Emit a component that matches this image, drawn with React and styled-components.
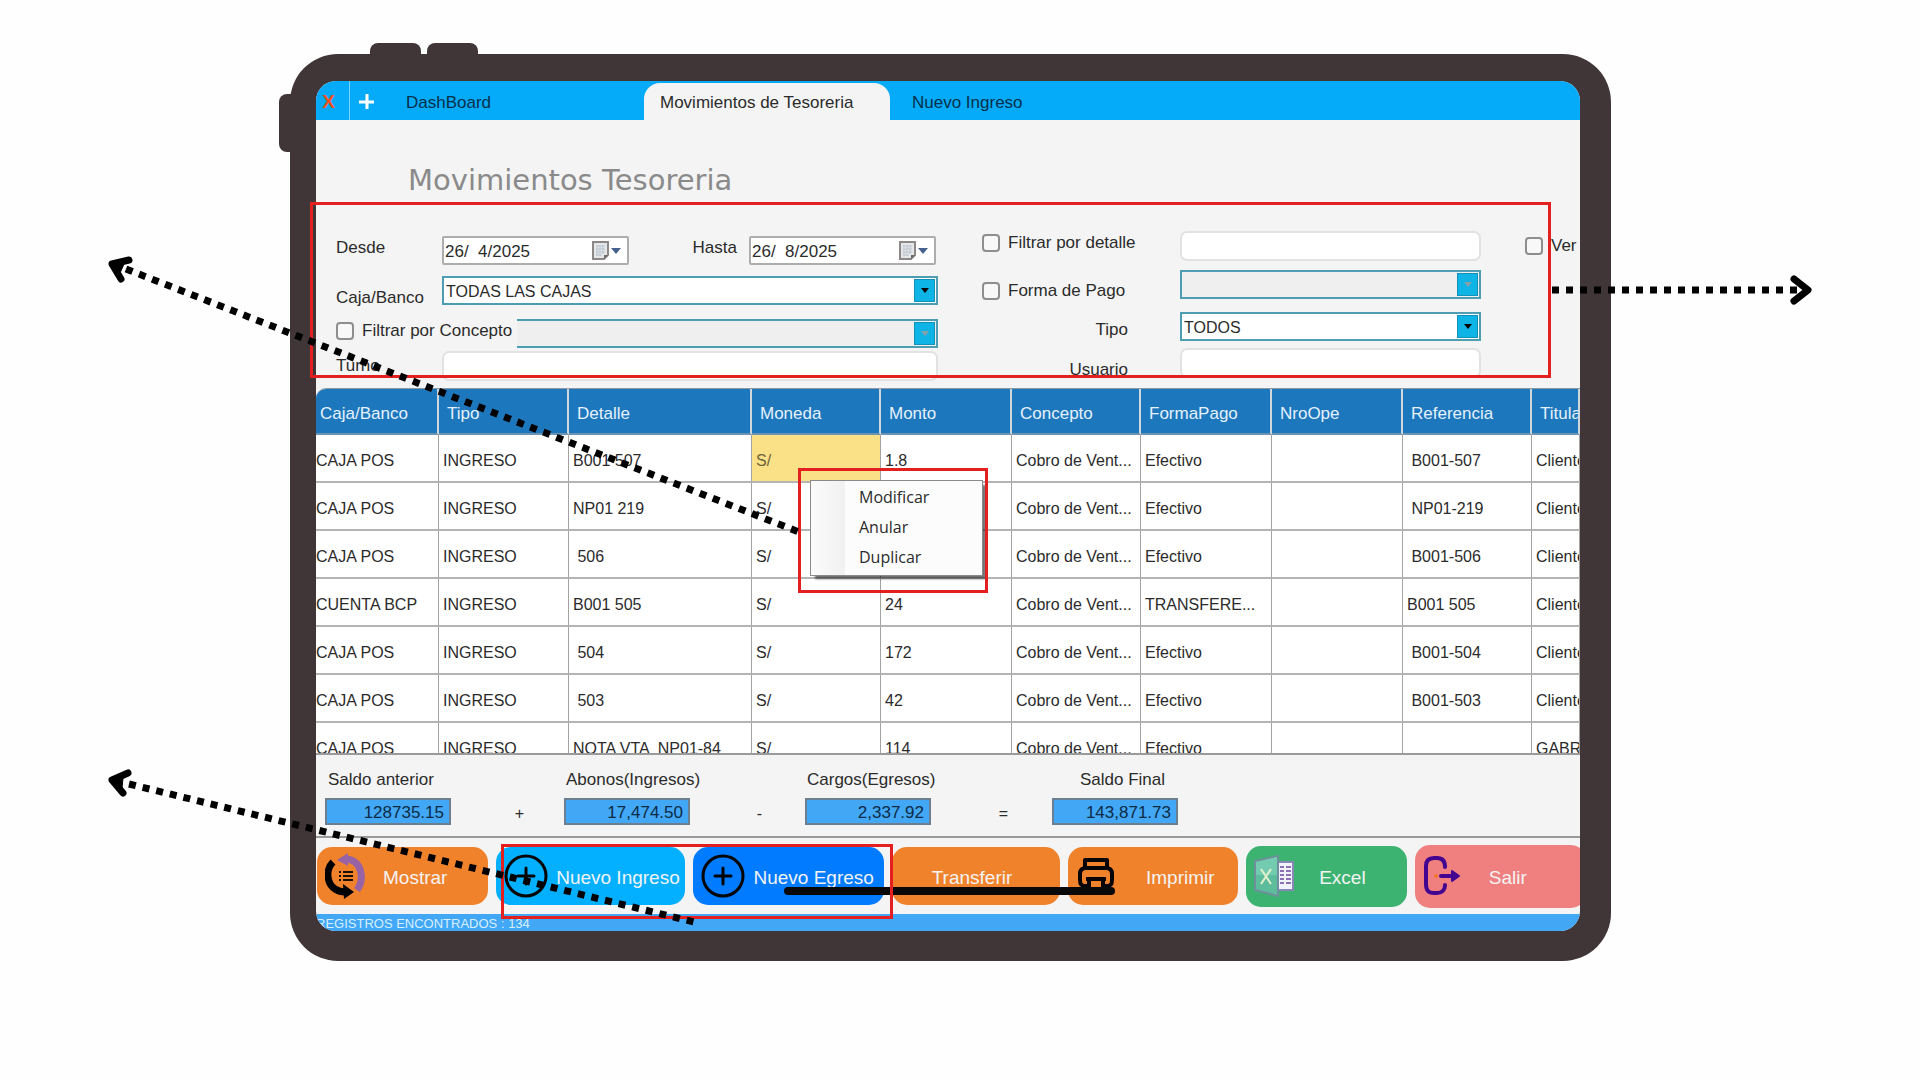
import React from 'react';
import styled, { createGlobalStyle } from 'styled-components';

const GlobalStyle = createGlobalStyle`
  * {
    box-sizing: border-box;
  }

  body {
    margin: 0;
    background-color: #fefefe;
    font-family: 'Liberation Sans', Arial, sans-serif;
    font-size: 17px;
    color: #2b2b2b;
  }

  button, input, select {
    font-family: inherit;
    font-size: inherit;
    color: inherit;
    margin: 0;
  }
`;

const Stage = styled.main`
  position: relative;
  min-height: 1080px;
  padding: 54px 309px 100px 290px;
  overflow: hidden;
`;

const Device = styled.div`
  position: relative;
  padding: 27px 31px 30px 26px;
  background-color: #403637;
  border-radius: 48px;
`;

const DeviceKey = styled.span`
  position: absolute;
  top: ${(props) => props.$top}px;
  left: ${(props) => props.$left}px;
  width: ${(props) => props.$width}px;
  height: ${(props) => props.$height}px;
  background-color: #403637;
  border-radius: 8px;
`;

const Screen = styled.div`
  background-color: #f4f4f4;
  border-radius: 20px;
  overflow: hidden;
`;

const TabBar = styled.nav`
  display: flex;
  height: 39px;
  background-color: #05aaf9;
`;

const TabAction = styled.button`
  display: flex;
  align-items: center;
  justify-content: center;
  width: 34px;
  padding: 2px ${(props) => (props.$divider ? 8 : 2)}px 0 0;
  border: 0;
  border-right: ${(props) => (props.$divider ? '1px solid #7fd0fa' : '0')};
  background: none;
  color: #f4511e;
  font-size: 19px;
  font-weight: bold;
`;

const Tab = styled.button`
  width: ${(props) => props.$width}px;
  margin-top: 2px;
  padding: 2px ${(props) => (props.$active ? 16 : 22)}px 0;
  border: 0;
  border-radius: 16px 16px 0 0;
  background-color: ${(props) => (props.$active ? '#f4f4f4' : 'transparent')};
  color: ${(props) => (props.$active ? '#2b2b2b' : '#06304a')};
  text-align: left;
  white-space: nowrap;
`;

const Title = styled.h1`
  margin: 0;
  padding: 40px 0 0 92px;
  font-family: 'DejaVu Sans', Verdana, sans-serif;
  font-size: 29px;
  font-weight: normal;
  line-height: 40px;
  color: #8a8a8a;
`;

const Filters = styled.form`
  display: grid;
  grid-template-columns: minmax(0, 602fr) minmax(0, 499fr) 55px;
  column-gap: 44px;
  padding: 31px 0 6px 20px;
`;

const MainFilters = styled.div`
  display: grid;
  grid-template-columns: 106px minmax(0, 187fr) 120px minmax(0, 189fr);
  grid-template-rows: 40px 43px 32px 30px;
  align-items: start;
  padding-top: 5px;
`;

const ExtraFilters = styled.div`
  display: grid;
  grid-template-columns: 198px minmax(0, 1fr);
  grid-template-rows: 39px 42px 36px 34px;
  align-items: start;
`;

const ViewFilters = styled.div`
  padding-top: 3px;
`;

const Label = styled.label`
  display: flex;
  align-items: center;
  gap: 8px;
  align-self: ${(props) => props.$align || 'start'};
  justify-self: ${(props) => props.$justify || 'start'};
  padding-right: ${(props) => props.$end || 0}px;
  line-height: 24px;
  white-space: nowrap;
`;

const Check = styled.input`
  appearance: none;
  flex: none;
  width: 18px;
  height: 18px;
  border: 2px solid #8e8e8e;
  border-radius: 4px;
  background-color: #f8f8f8;
`;

const ConceptRow = styled.div`
  grid-column: 1 / -1;
  display: flex;

  label {
    width: 181px;
  }
`;

const DateBox = styled.div`
  display: flex;
  align-items: center;
  width: 187px;
  height: 29px;
  padding-right: 6px;
  border: 2px solid #adadad;
  border-radius: 2px;
  background-color: #fff;

  input {
    flex: 1;
    min-width: 0;
    padding: 3px 0 0 1px;
    border: 0;
    background: none;
  }
`;

const TextBox = styled.input`
  width: 100%;
  height: 30px;
  border: 2px solid #e2e2e2;
  border-radius: 7px;
  background-color: #fff;
  grid-column: ${(props) => (props.$wide ? '2 / -1' : 'auto')};
`;

const SelectBox = styled.div`
  display: flex;
  flex: 1;
  height: 29px;
  padding: 1px;
  border: 2px solid #4d9db3;
  border-left-width: ${(props) => (props.$open ? 0 : 2)}px;
  background-color: ${(props) => (props.$disabled ? '#efefef' : '#fff')};
  grid-column: ${(props) => (props.$wide ? '2 / -1' : 'auto')};

  select {
    appearance: none;
    flex: 1;
    min-width: 0;
    padding: 2px 1px 0;
    border: 0;
    background: none;
    font-size: 16px;
    opacity: 1;
  }
`;

const SelectArrow = styled.span`
  display: flex;
  align-items: center;
  justify-content: center;
  width: 21px;
  border: 1px solid #1390b8;
  background-color: #0fb4e6;
  color: ${(props) => (props.$disabled ? '#86a0a8' : '#000')};
`;

const GridView = styled.div`
  height: 365px;
  overflow: hidden;
  border-top: 1px solid #8d99a3;
  border-radius: 10px 0 0 0;
  background-color: #fff;
`;

const Table = styled.table`
  width: 100%;
  table-layout: fixed;
  border-collapse: separate;
  border-spacing: 0;
`;

const HeadCell = styled.th`
  height: 46px;
  padding: 6px 0 0 8px;
  border-right: 2px solid #cfd6dc;
  border-bottom: 2px solid #6d93b3;
  background-color: #1c77bd;
  color: #e6f1fa;
  font-weight: normal;
  text-align: left;
  white-space: nowrap;
  overflow: hidden;

  &:first-child {
    padding-left: 4px;
  }
`;

const Cell = styled.td`
  height: 48px;
  padding: 6px 0 0 4px;
  border-right: 1px solid #a3a3a3;
  border-bottom: 2px solid #b5b5b5;
  background-color: ${(props) => (props.$selected ? '#fae188' : '#fff')};
  color: ${(props) => (props.$selected ? '#6d6238' : '#2b2b2b')};
  font-size: 16px;
  white-space: pre;
  overflow: hidden;

  &:first-child {
    padding-left: 0;
  }
`;

const Totals = styled.section`
  display: grid;
  grid-template-columns: 126px 113px 126px 115px 126px 121px 126px;
  grid-template-rows: 24px 27px;
  row-gap: 6px;
  padding: 13px 9px 11px;
  border-top: 2px solid #9a9a9a;
  border-bottom: 2px solid #9a9a9a;
`;

const TotalLabel = styled.label`
  grid-row: 1;
  grid-column: ${(props) => props.$col};
  padding-left: ${(props) => props.$indent}px;
  line-height: 24px;
  white-space: nowrap;
`;

const TotalBox = styled.output`
  grid-row: 2;
  grid-column: ${(props) => props.$col};
  padding-right: 5px;
  border: 2px solid #6b7f90;
  background-color: #42a7f5;
  color: #0d2b45;
  line-height: 25px;
  text-align: right;
`;

const Operator = styled.span`
  grid-row: 2;
  grid-column: ${(props) => props.$col};
  padding-left: 24px;
  font-size: 16px;
  line-height: 32px;
  text-align: center;
`;

const ActionBar = styled.div`
  display: flex;
  align-items: center;
  gap: 8px;
  height: 76px;
  margin-right: -6px;
  padding-left: 1px;
`;

const ActionButton = styled.button`
  display: flex;
  align-items: center;
  flex: ${(props) => props.$grow} 1 0;
  gap: ${(props) => props.$gap}px;
  min-width: 0;
  height: ${(props) => props.$height || 58}px;
  padding: 0 0 0 8px;
  border: 0;
  border-radius: 15px;
  background-color: ${(props) => props.$color};
  color: #f3f3f3;
  font-size: 19px;
  white-space: nowrap;

  svg {
    flex: none;
  }
`;

const ActionText = styled.span`
  padding-top: 4px;
`;

const StatusBar = styled.footer`
  height: 17px;
  background-color: #42a7f5;
  color: #d8efff;
  font-size: 13px;
  line-height: 19px;
  white-space: nowrap;
`;

const ContextMenu = styled.ul`
  position: absolute;
  top: 480px;
  left: 810px;
  width: 173px;
  margin: 0;
  padding: 1px 2px 3px;
  border: 1px solid #8a8a8a;
  background: linear-gradient(to right, #fbfbfb, #f1f1f1 34px, #fcfcfc 34px);
  box-shadow: 4px 4px 2px -1px rgba(0, 0, 0, 0.55);
  list-style: none;
`;

const MenuItem = styled.button`
  display: block;
  width: 100%;
  padding: 0 0 0 46px;
  border: 0;
  background: none;
  font-family: 'Open Sans', 'Noto Sans', sans-serif;
  font-size: 16px;
  line-height: 30px;
  text-align: left;
`;

const Highlight = styled.div`
  position: absolute;
  top: ${(props) => props.$top}px;
  left: ${(props) => props.$left}px;
  width: ${(props) => props.$width}px;
  height: ${(props) => props.$height}px;
  border: 3px solid #e41f1f;
  pointer-events: none;
`;

const HomeIndicator = styled.div`
  position: absolute;
  top: 887px;
  left: 784px;
  width: 331px;
  height: 8px;
  border-radius: 4px;
  background-color: #080808;
`;

const Arrows = styled.svg`
  position: absolute;
  top: 0;
  left: 0;
  pointer-events: none;
`;

const columns = [
  { name: 'Caja/Banco', width: 123 },
  { name: 'Tipo', width: 130 },
  { name: 'Detalle', width: 183 },
  { name: 'Moneda', width: 129 },
  { name: 'Monto', width: 131 },
  { name: 'Concepto', width: 129 },
  { name: 'FormaPago', width: 131 },
  { name: 'NroOpe', width: 131 },
  { name: 'Referencia', width: 129 },
  { name: 'Titular' },
];

const rows = [
  ['CAJA POS', 'INGRESO', 'B001 507', 'S/', '1.8', 'Cobro de Vent...', 'Efectivo', '', ' B001-507', 'Cliente'],
  ['CAJA POS', 'INGRESO', 'NP01 219', 'S/', '', 'Cobro de Vent...', 'Efectivo', '', ' NP01-219', 'Cliente'],
  ['CAJA POS', 'INGRESO', ' 506', 'S/', '', 'Cobro de Vent...', 'Efectivo', '', ' B001-506', 'Cliente'],
  ['CUENTA BCP', 'INGRESO', 'B001 505', 'S/', '24', 'Cobro de Vent...', 'TRANSFERE...', '', 'B001 505', 'Cliente'],
  ['CAJA POS', 'INGRESO', ' 504', 'S/', '172', 'Cobro de Vent...', 'Efectivo', '', ' B001-504', 'Cliente'],
  ['CAJA POS', 'INGRESO', ' 503', 'S/', '42', 'Cobro de Vent...', 'Efectivo', '', ' B001-503', 'Cliente'],
  ['CAJA POS', 'INGRESO', 'NOTA VTA  NP01-84', 'S/', '114', 'Cobro de Vent...', 'Efectivo', '', '', 'GABRIEL'],
];

const totals = [
  { id: 'anterior', label: 'Saldo anterior', value: '128735.15', indent: 3, operator: '+' },
  { id: 'abonos', label: 'Abonos(Ingresos)', value: '17,474.50', indent: 2, operator: '-' },
  { id: 'cargos', label: 'Cargos(Egresos)', value: '2,337.92', indent: 2, operator: '=' },
  { id: 'final', label: 'Saldo Final', value: '143,871.73', indent: 28 },
];

const CalendarIcon = () => (
  <svg width="29" height="20" viewBox="0 0 29 20">
    <path d="M1 1h15v13l-4 4H1z" fill="#e4e7ea" stroke="#8d8787" strokeWidth="2" />
    <path d="M4 5h9M4 8h9M4 11h9M4 14h6M5 4v11M8 4v11M11 4v9" stroke="#bcc5cf" strokeWidth="1" />
    <path d="M16 14h-4v4z" fill="#6f6a6a" />
    <path d="M19 7h10l-5 6z" fill="#47618f" />
  </svg>
);

const RefreshListIcon = () => (
  <svg width="41" height="46" viewBox="0 0 41 46">
    <path d="M8 9C0 17 2 31 10 36c3 2 6 3 10 3" fill="none" stroke="#000" strokeWidth="7" />
    <path d="M18 31l11 8-10 7z" fill="#000" />
    <path d="M20 6c17 0 20 20 12 31" fill="none" stroke="#9763a4" strokeWidth="7" />
    <path d="M12 7L23 0v13z" fill="#9763a4" />
    <path d="M18 19h10M18 23h10M18 27h10" stroke="#1a0f08" strokeWidth="2" />
    <path d="M14 19h2M14 23h2M14 27h2" stroke="#1a0f08" strokeWidth="2" />
  </svg>
);

const PlusCircleIcon = () => (
  <svg width="44" height="46" viewBox="0 0 44 46" fill="none" stroke="#050505">
    <circle cx="22" cy="23" r="20" strokeWidth="3" />
    <path d="M22 15v16M14 23h16" strokeWidth="3" strokeLinecap="round" />
  </svg>
);

const PrinterIcon = () => (
  <svg width="40" height="40" viewBox="0 0 40 40" fill="none" stroke="#050505" strokeWidth="4" strokeLinejoin="round">
    <path d="M9 11V4h22v7" />
    <path d="M12 30H9c-4 0-5-2-5-6v-6c0-4 2-6 6-6h20c4 0 6 2 6 6v6c0 4-1 6-5 6h-3" />
    <path d="M10 23h20M13 23v14h14V23" />
  </svg>
);

const ExcelIcon = () => (
  <svg width="41" height="42" viewBox="0 0 41 42">
    <rect x="24" y="7" width="15" height="28" fill="#f0f4ff" stroke="#8a86b8" strokeWidth="2" />
    <path d="M26 12h4M32 12h5M26 16h4M32 16h5M26 20h4M32 20h5M26 24h4M32 24h5M26 28h4M32 28h5" stroke="#8d70b5" strokeWidth="2" />
    <path d="M1 6l23-5v40L1 35z" fill="#5cbc9c" stroke="#6f8f9c" strokeWidth="2" />
    <path d="M2 7l21-5v18H2z" fill="#74ccb0" />
    <path d="M7 14l10 15M17 14L7 29" stroke="#e3f2cd" strokeWidth="2" />
  </svg>
);

const ExitIcon = () => (
  <svg width="38" height="40" viewBox="0 0 38 40" fill="none" stroke="#43058f" strokeWidth="4" strokeLinecap="round">
    <path d="M22 11c0-6-3-9-8-9h-3c-6 0-8 3-8 8v18c0 6 2 9 8 9h3c5 0 8-3 8-8" />
    <path d="M18 20h12" />
    <path d="M29 15l7 5-7 5z" fill="#43058f" strokeWidth="2" strokeLinejoin="round" />
    <circle cx="13" cy="20" r="1" stroke="#f4742a" strokeWidth="2" />
  </svg>
);

const DateField = ({ id, value }) => (
  <DateBox>
    <input id={id} type="text" defaultValue={value} />
    <CalendarIcon />
  </DateBox>
);

const SelectField = ({ id, value, disabled, wide, open, name }) => (
  <SelectBox $disabled={disabled} $wide={wide} $open={open}>
    <select id={id} disabled={disabled} aria-label={name}>
      <option>{value}</option>
    </select>
    <SelectArrow $disabled={disabled}>
      <svg width="8" height="5" viewBox="0 0 8 5">
        <path d="M0 0h8L4 5z" fill="currentColor" />
      </svg>
    </SelectArrow>
  </SelectBox>
);

const FilterForm = () => (
  <Filters>
    <MainFilters>
      <Label htmlFor="desde">Desde</Label>
      <DateField id="desde" value="26/  4/2025" />
      <Label htmlFor="hasta" $justify="end" $end={12}>Hasta</Label>
      <DateField id="hasta" value="26/  8/2025" />
      <Label htmlFor="caja" $align="center">Caja/Banco</Label>
      <SelectField id="caja" value="TODAS LAS CAJAS" wide />
      <ConceptRow>
        <Label>
          <Check type="checkbox" />
          Filtrar por Concepto
        </Label>
        <SelectField name="Concepto" value="" disabled open />
      </ConceptRow>
      <Label htmlFor="turno" $align="center">Turno</Label>
      <TextBox id="turno" type="text" $wide />
    </MainFilters>
    <ExtraFilters>
      <Label>
        <Check type="checkbox" />
        Filtrar por detalle
      </Label>
      <TextBox type="text" aria-label="Detalle" />
      <Label $align="center">
        <Check type="checkbox" />
        Forma de Pago
      </Label>
      <SelectField name="Forma de Pago" value="" disabled />
      <Label htmlFor="tipo" $align="center" $justify="end" $end={52}>Tipo</Label>
      <SelectField id="tipo" value="TODOS" />
      <Label htmlFor="usuario" $align="end" $justify="end" $end={52}>Usuario</Label>
      <TextBox id="usuario" type="text" />
    </ExtraFilters>
    <ViewFilters>
      <Label>
        <Check type="checkbox" />
        Ver
      </Label>
    </ViewFilters>
  </Filters>
);

const MovementsTable = () => (
  <GridView>
    <Table>
      <colgroup>
        {columns.map((column) => (
          <col key={column.name} width={column.width} />
        ))}
      </colgroup>
      <thead>
        <tr>
          {columns.map((column) => (
            <HeadCell key={column.name}>{column.name}</HeadCell>
          ))}
        </tr>
      </thead>
      <tbody>
        {rows.map((row, y) => (
          <tr key={y}>
            {row.map((value, x) => (
              <Cell key={x} $selected={y === 0 && x === 3}>{value}</Cell>
            ))}
          </tr>
        ))}
      </tbody>
    </Table>
  </GridView>
);

const TotalsPanel = () => (
  <Totals>
    {totals.map((total, i) => (
      <React.Fragment key={total.id}>
        <TotalLabel htmlFor={total.id} $col={i * 2 + 1} $indent={total.indent}>{total.label}</TotalLabel>
        <TotalBox id={total.id} $col={i * 2 + 1}>{total.value}</TotalBox>
        {total.operator && <Operator $col={i * 2 + 2}>{total.operator}</Operator>}
      </React.Fragment>
    ))}
  </Totals>
);

const Action = ({ grow, gap, height, color, icon, children }) => (
  <ActionButton $grow={grow} $gap={gap} $height={height} $color={color}>
    {icon || <span />}
    <ActionText>{children}</ActionText>
  </ActionButton>
);

const Actions = () => (
  <ActionBar>
    <Action grow={171} gap={17} color="#f0822c" icon={<RefreshListIcon />}>Mostrar</Action>
    <Action grow={190} gap={8} color="#02b0ff" icon={<PlusCircleIcon />}>Nuevo Ingreso</Action>
    <Action grow={191} gap={8} color="#017bff" icon={<PlusCircleIcon />}>Nuevo Egreso</Action>
    <Action grow={168} gap={32} color="#f0822c">Transferir</Action>
    <Action grow={170} gap={30} color="#f0822c" icon={<PrinterIcon />}>Imprimir</Action>
    <Action grow={160} gap={24} height={61} color="#3db371" icon={<ExcelIcon />}>Excel</Action>
    <Action grow={171} gap={28} height={63} color="#f08080" icon={<ExitIcon />}>Salir</Action>
  </ActionBar>
);

const App = () => {
  return (
    <>
      <GlobalStyle />
      <Stage>
        <Device>
          <DeviceKey $top={-11} $left={80} $width={51} $height={30} />
          <DeviceKey $top={-11} $left={137} $width={51} $height={30} />
          <DeviceKey $top={40} $left={-11} $width={30} $height={58} />
          <Screen>
            <TabBar>
              <TabAction $divider>X</TabAction>
              <TabAction aria-label="Nueva pestaña">
                <svg width="15" height="15" viewBox="0 0 15 15">
                  <path d="M8 0v15M0 8h15" stroke="#fff" strokeWidth="3" />
                </svg>
              </TabAction>
              <Tab $width={260}>DashBoard</Tab>
              <Tab $width={246} $active>Movimientos de Tesoreria</Tab>
              <Tab $width={246}>Nuevo Ingreso</Tab>
            </TabBar>
            <Title>Movimientos Tesoreria</Title>
            <FilterForm />
            <MovementsTable />
            <TotalsPanel />
            <Actions />
            <StatusBar>REGISTROS ENCONTRADOS : 134</StatusBar>
          </Screen>
        </Device>
        <ContextMenu>
          <li><MenuItem>Modificar</MenuItem></li>
          <li><MenuItem>Anular</MenuItem></li>
          <li><MenuItem>Duplicar</MenuItem></li>
        </ContextMenu>
        <HomeIndicator />
        <Highlight $top={202} $left={310} $width={1241} $height={176} />
        <Highlight $top={468} $left={798} $width={190} $height={125} />
        <Highlight $top={844} $left={501} $width={392} $height={75} />
        <Arrows width="1920" height="1080" viewBox="0 0 1920 1080" fill="none" stroke="#000" strokeWidth="7">
          <path d="M126 269L799 532" strokeDasharray="7 7" />
          <path d="M129 260L112 264L121 279" strokeLinecap="round" strokeLinejoin="round" />
          <path d="M112 264l12 0l-4 9z" fill="#000" strokeWidth="1" />
          <path d="M129 784L694 922" strokeDasharray="7 7" />
          <path d="M128 773L112 780L123 793" strokeLinecap="round" strokeLinejoin="round" />
          <path d="M112 780l11 -2l-1 10z" fill="#000" strokeWidth="1" />
          <path d="M1552 290H1797" strokeDasharray="7 7" />
          <path d="M1794 279L1808 290L1794 301" strokeLinecap="round" strokeLinejoin="round" />
        </Arrows>
      </Stage>
    </>
  );
};

export default App;
